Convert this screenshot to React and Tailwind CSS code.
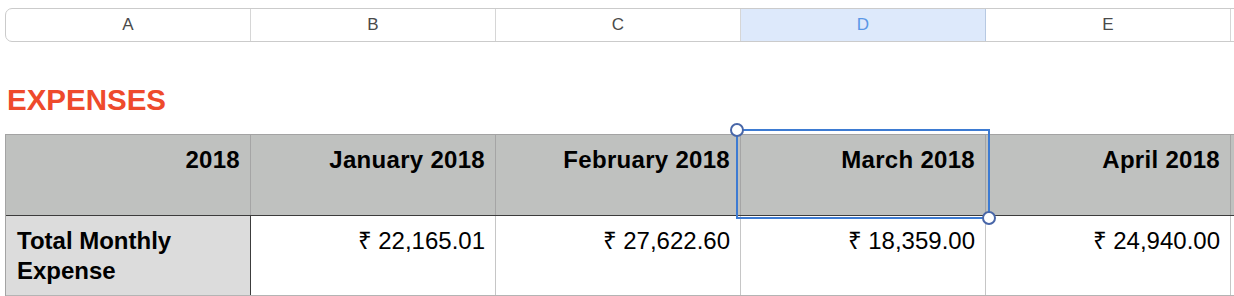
import React from 'react';

const letters = ['A', 'B', 'C', 'D', 'E', ''];
const months = ['2018', 'January 2018', 'February 2018', 'March 2018', 'April 2018', ''];
const totals = ['₹ 22,165.01', '₹ 27,622.60', '₹ 18,359.00', '₹ 24,940.00', ''];

export default function App() {
  return (
    <div
      className="relative w-[1234px] h-[296px] overflow-hidden bg-white"
      style={{ fontFamily: '"Liberation Sans", Arial, sans-serif' }}
    >
      {/* column letters */}
      <div className="mt-[8px] ml-[5px] flex w-[1500px] h-[34px] border border-[#cbcbcb] rounded-l-[7px] overflow-hidden">
        {letters.map((l, i) => (
          <div
            key={i}
            className={
              l === 'D'
                ? 'w-[245px] shrink-0 flex items-center justify-center bg-[#dde9fb] text-[#5a97e6] text-[17px] border-r border-[#b7c9e2]'
                : 'w-[245px] shrink-0 flex items-center justify-center text-[#4a4a4a] text-[17px] border-r border-[#d6d6d6]'
            }
          >
            {l}
          </div>
        ))}
      </div>

      {/* title */}
      <h1 className="mt-[43px] ml-[7px] h-[29px] text-[29.5px] leading-[29px] font-bold text-[#ee4a2c]">EXPENSES</h1>

      {/* table */}
      <div className="mt-[20px] ml-[5px] w-[1500px] border-t border-l border-[#a3a3a3]">
        <div className="flex h-[81px] border-b border-[#3c3c3c] bg-[#bfc1bf]">
          {months.map((m, i) => (
            <div
              key={i}
              className="w-[245px] shrink-0 border-r border-[#a5a5a5] pt-[10px] pr-[10px] text-right text-[24px] leading-[30px] font-bold tracking-[0.3px] text-black"
            >
              {m}
            </div>
          ))}
        </div>
        <div className="flex h-[80px] border-b border-[#b4b4b4]">
          <div className="w-[245px] shrink-0 bg-[#dcdcdc] border-r border-[#3c3c3c] pt-[10px] pl-[11px] text-[24px] leading-[30px] font-bold text-black">
            Total Monthly
            <br />
            Expense
          </div>
          {totals.map((t, i) => (
            <div
              key={i}
              className="w-[245px] shrink-0 border-r border-[#c6c6c6] pt-[10px] pr-[10px] text-right text-[24px] leading-[30px] text-black"
            >
              {t}
            </div>
          ))}
        </div>
      </div>

      {/* selection on D header */}
      <div className="absolute left-[736px] top-[129px] w-[254px] h-[90px] border-2 border-[#3d7bd2]" />
      <div className="absolute left-[730px] top-[123px] w-[14px] h-[14px] rounded-full bg-white border-2 border-[#4866a8]" />
      <div className="absolute left-[982px] top-[211px] w-[14px] h-[14px] rounded-full bg-white border-2 border-[#4866a8]" />
    </div>
  );
}
